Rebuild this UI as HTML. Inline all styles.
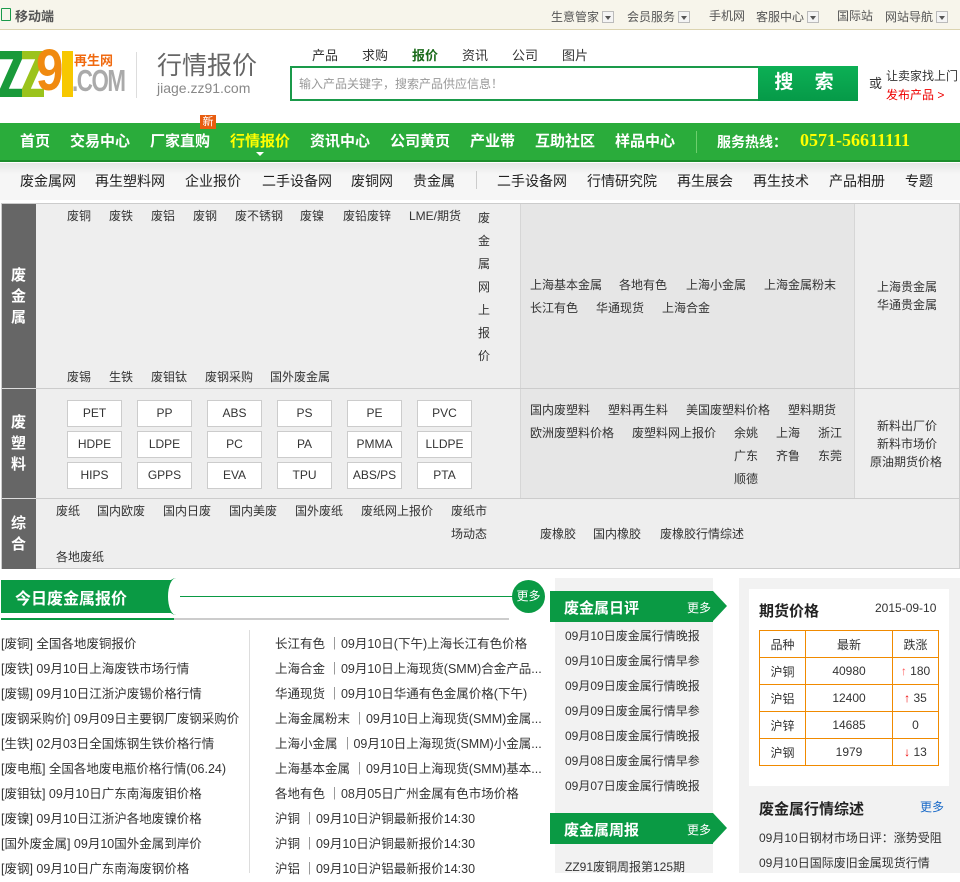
<!DOCTYPE html>
<html><head><meta charset="utf-8">
<style>
*{margin:0;padding:0;box-sizing:border-box}
body{width:960px;height:873px;overflow:hidden;position:relative;background:#fff;font-family:"Liberation Sans","Noto Sans CJK SC",sans-serif;font-size:12px;color:#333}
.a{position:absolute;white-space:nowrap}
.dd{display:inline-block;width:12px;height:12px;border:1px solid #bbb;background:#f4f4f4;vertical-align:-2px;margin-left:3px;position:relative}
.dd:after{content:"";position:absolute;left:2px;top:4px;border:3px solid transparent;border-top:4px solid #555}
.nav span{position:absolute;top:130px;color:#fff;font-size:15px;font-weight:bold}
.sub span{position:absolute;top:171px;color:#222;font-size:14px}
.t{font-size:12px;color:#333}
.box{position:absolute;width:55px;height:27px;border:1px solid #ccc;background:#fff;text-align:center;line-height:25px;font-size:12px;color:#333}
.l13{font-size:12.5px;color:#333}
</style></head><body>
<!-- top bar -->
<div class="a" style="left:0;top:0;width:960px;height:30px;background:#f7f5eb;border-bottom:1px solid #dcd4b0"></div>
<div class="a" style="left:1px;top:8px;width:10px;height:13px;border:1.5px solid #1a9a4a;border-radius:1px"></div>
<div class="a" style="left:15px;top:6px;font-size:13px;font-weight:bold;color:#555">移动端</div>
<div class="a" style="left:551px;top:8px;font-size:12px;color:#555">生意管家<i class="dd"></i></div>
<div class="a" style="left:627px;top:8px;font-size:12px;color:#555">会员服务<i class="dd"></i></div>
<div class="a" style="left:709px;top:7px;font-size:12px;color:#555">手机网</div>
<div class="a" style="left:756px;top:8px;font-size:12px;color:#555">客服中心<i class="dd"></i></div>
<div class="a" style="left:837px;top:7px;font-size:12px;color:#555">国际站</div>
<div class="a" style="left:885px;top:8px;font-size:12px;color:#555">网站导航<i class="dd"></i></div>
<!-- logo -->
<div class="a" style="left:0;top:51px;width:22px;height:46px;background:#1a9a3a;clip-path:polygon(0 0,100% 0,100% 18%,40% 82%,100% 82%,100% 100%,0 100%,0 82%,60% 18%,0 18%)"></div>
<div class="a" style="left:22px;top:51px;width:22px;height:46px;background:#9bc31c;clip-path:polygon(0 0,100% 0,100% 18%,40% 82%,100% 82%,100% 100%,0 100%,0 82%,60% 18%,0 18%)"></div>
<div class="a" style="left:36px;top:42px;font-size:58px;font-weight:bold;line-height:58px;color:#f08a10;transform:scaleX(.85);transform-origin:left">9</div>
<div class="a" style="left:62px;top:51px;width:11px;height:46px;background:#f7c800"></div>
<div class="a" style="left:74px;top:50px;font-size:13px;color:#f06a10;font-weight:bold">再生网</div>
<div class="a" style="left:72px;top:64px;font-size:31px;color:#aaa;font-weight:bold;line-height:34px;letter-spacing:-2px;transform:scaleX(.72);transform-origin:left">.COM</div>
<div class="a" style="left:136px;top:52px;width:1px;height:46px;background:#ddd"></div>
<div class="a" style="left:157px;top:46px;font-size:25px;color:#666">行情报价</div>
<div class="a" style="left:157px;top:80px;font-size:14px;color:#888">jiage.zz91.com</div>
<!-- search -->
<div class="a" style="left:312px;top:45px;font-size:13px;color:#333">产品</div>
<div class="a" style="left:362px;top:45px;font-size:13px;color:#333">求购</div>
<div class="a" style="left:412px;top:45px;font-size:13px;color:#1b6b1b;font-weight:bold">报价</div>
<div class="a" style="left:462px;top:45px;font-size:13px;color:#333">资讯</div>
<div class="a" style="left:512px;top:45px;font-size:13px;color:#333">公司</div>
<div class="a" style="left:562px;top:45px;font-size:13px;color:#333">图片</div>
<div class="a" style="left:290px;top:66px;width:568px;height:35px;border:2px solid #1a9a4a;background:#fff"></div>
<div class="a" style="left:299px;top:75px;font-size:12px;color:#999">输入产品关键字，搜索产品供应信息！</div>
<div class="a" style="left:758px;top:66px;width:100px;height:35px;background:linear-gradient(#0cb055,#069a48);color:#fff;font-size:19px;font-weight:bold;text-align:center;line-height:34px;letter-spacing:8px">搜 索</div>
<div class="a" style="left:869px;top:73px;font-size:13px;color:#333">或</div>
<div class="a" style="left:886px;top:67px;font-size:12px;color:#333">让卖家找上门</div>
<div class="a" style="left:886px;top:86px;font-size:12px;color:#e00">发布产品 &gt;</div>
<!-- green nav -->
<div class="a" style="left:0;top:123px;width:960px;height:39px;background:#2aac3b;border-bottom:2px solid #1d8d2d"></div>
<div class="nav">
<span style="left:20px">首页</span><span style="left:70px">交易中心</span><span style="left:150px">厂家直购</span><span style="left:230px;color:#ff0">行情报价</span><span style="left:310px">资讯中心</span><span style="left:390px">公司黄页</span><span style="left:470px">产业带</span><span style="left:535px">互助社区</span><span style="left:615px">样品中心</span>
<span style="left:717px;top:132px;font-size:14px">服务热线：</span><span style="left:800px;top:130px;font-size:18px;color:#ff0;font-family:'Liberation Serif',serif">0571-56611111</span>
</div>
<div class="a" style="left:696px;top:131px;width:1px;height:22px;background:#6dcf6d"></div>
<div class="a" style="left:200px;top:115px;width:16px;height:14px;background:#e85d10;color:#fff;font-size:11px;text-align:center;line-height:14px">新</div>
<div class="a" style="left:256px;top:152px;border:4px solid transparent;border-top:4px solid #fff"></div>
<!-- sub nav -->
<div class="a" style="left:0;top:163px;width:960px;height:37px;background:linear-gradient(#e6e6e6,#f6f6f6 30%,#f6f6f6)"></div>
<div class="sub"><span style="left:20px">废金属网</span><span style="left:95px">再生塑料网</span><span style="left:185px">企业报价</span><span style="left:262px">二手设备网</span><span style="left:351px">废铜网</span><span style="left:413px">贵金属</span><span style="left:497px">二手设备网</span><span style="left:587px">行情研究院</span><span style="left:677px">再生展会</span><span style="left:753px">再生技术</span><span style="left:829px">产品相册</span><span style="left:905px">专题</span></div>
<div class="a" style="left:476px;top:171px;width:1px;height:18px;background:#ccc"></div>
<!-- category table -->
<div class="a" style="left:1px;top:203px;width:959px;height:366px;background:#eee;border:1px solid #ccc"></div>
<div class="a" style="left:520px;top:204px;width:335px;height:295px;background:#e6e6e6;border-left:1px solid #d6d6d6;border-right:1px solid #d6d6d6"></div>
<div class="a" style="left:1px;top:388px;width:959px;height:1px;background:#ccc"></div>
<div class="a" style="left:1px;top:498px;width:959px;height:1px;background:#ccc"></div>
<div class="a" style="left:2px;top:204px;width:34px;height:365px;background:#666"></div>
<div class="a" style="left:2px;top:388px;width:34px;height:1px;background:#ddd"></div>
<div class="a" style="left:2px;top:498px;width:34px;height:1px;background:#ddd"></div>
<div class="a" style="left:11px;top:265px;color:#fff;font-size:15px;font-weight:bold;line-height:21px;white-space:normal;width:16px">废金属</div>
<div class="a" style="left:11px;top:412px;color:#fff;font-size:15px;font-weight:bold;line-height:21px;white-space:normal;width:16px">废塑料</div>
<div class="a" style="left:11px;top:513px;color:#fff;font-size:15px;font-weight:bold;line-height:21px;white-space:normal;width:16px">综合</div>
<div class="a t" style="left:67px;top:207px">废铜</div><div class="a t" style="left:109px;top:207px">废铁</div><div class="a t" style="left:151px;top:207px">废铝</div><div class="a t" style="left:193px;top:207px">废钢</div><div class="a t" style="left:235px;top:207px">废不锈钢</div><div class="a t" style="left:300px;top:207px">废镍</div><div class="a t" style="left:343px;top:207px">废铅废锌</div><div class="a t" style="left:409px;top:207px">LME/期货</div>
<div class="a t" style="left:478px;top:207px;white-space:normal;width:12px;line-height:23px">废金属网上报价</div>
<div class="a t" style="left:67px;top:368px">废锡</div><div class="a t" style="left:109px;top:368px">生铁</div><div class="a t" style="left:151px;top:368px">废钼钛</div><div class="a t" style="left:205px;top:368px">废钢采购</div><div class="a t" style="left:270px;top:368px">国外废金属</div>
<div class="a t" style="left:530px;top:276px">上海基本金属</div><div class="a t" style="left:619px;top:276px">各地有色</div><div class="a t" style="left:686px;top:276px">上海小金属</div><div class="a t" style="left:764px;top:276px">上海金属粉末</div>
<div class="a t" style="left:530px;top:299px">长江有色</div><div class="a t" style="left:596px;top:299px">华通现货</div><div class="a t" style="left:662px;top:299px">上海合金</div>
<div class="a t" style="left:877px;top:278px">上海贵金属</div><div class="a t" style="left:877px;top:296px">华通贵金属</div>
<!-- plastic boxes -->
<div class="box" style="left:67px;top:400px">PET</div><div class="box" style="left:137px;top:400px">PP</div><div class="box" style="left:207px;top:400px">ABS</div><div class="box" style="left:277px;top:400px">PS</div><div class="box" style="left:347px;top:400px">PE</div><div class="box" style="left:417px;top:400px">PVC</div>
<div class="box" style="left:67px;top:431px">HDPE</div><div class="box" style="left:137px;top:431px">LDPE</div><div class="box" style="left:207px;top:431px">PC</div><div class="box" style="left:277px;top:431px">PA</div><div class="box" style="left:347px;top:431px">PMMA</div><div class="box" style="left:417px;top:431px">LLDPE</div>
<div class="box" style="left:67px;top:462px">HIPS</div><div class="box" style="left:137px;top:462px">GPPS</div><div class="box" style="left:207px;top:462px">EVA</div><div class="box" style="left:277px;top:462px">TPU</div><div class="box" style="left:347px;top:462px">ABS/PS</div><div class="box" style="left:417px;top:462px">PTA</div>
<div class="a t" style="left:530px;top:401px">国内废塑料</div><div class="a t" style="left:608px;top:401px">塑料再生料</div><div class="a t" style="left:686px;top:401px">美国废塑料价格</div><div class="a t" style="left:788px;top:401px">塑料期货</div>
<div class="a t" style="left:530px;top:424px">欧洲废塑料价格</div><div class="a t" style="left:632px;top:424px">废塑料网上报价</div><div class="a t" style="left:734px;top:424px">余姚</div><div class="a t" style="left:776px;top:424px">上海</div><div class="a t" style="left:818px;top:424px">浙江</div>
<div class="a t" style="left:734px;top:447px">广东</div><div class="a t" style="left:776px;top:447px">齐鲁</div><div class="a t" style="left:818px;top:447px">东莞</div>
<div class="a t" style="left:734px;top:470px">顺德</div>
<div class="a t" style="left:877px;top:417px">新料出厂价</div><div class="a t" style="left:877px;top:435px">新料市场价</div><div class="a t" style="left:870px;top:453px">原油期货价格</div>
<div class="a t" style="left:56px;top:502px">废纸</div><div class="a t" style="left:97px;top:502px">国内欧废</div><div class="a t" style="left:163px;top:502px">国内日废</div><div class="a t" style="left:229px;top:502px">国内美废</div><div class="a t" style="left:295px;top:502px">国外废纸</div><div class="a t" style="left:361px;top:502px">废纸网上报价</div><div class="a t" style="left:451px;top:502px">废纸市</div><div class="a t" style="left:451px;top:525px">场动态</div><div class="a t" style="left:56px;top:548px">各地废纸</div>
<div class="a t" style="left:540px;top:525px">废橡胶</div><div class="a t" style="left:593px;top:525px">国内橡胶</div><div class="a t" style="left:660px;top:525px">废橡胶行情综述</div>
<!-- left news -->
<div class="a" style="left:1px;top:580px;width:172px;height:33px;background:#0a9a44"></div>
<div class="a" style="left:165px;top:578px;width:22px;height:37px;border-radius:50%/50%;background:#fff;border-left:3px solid #0a9a44"></div>
<div class="a" style="left:15px;top:585px;font-size:16px;font-weight:bold;color:#fff">今日废金属报价</div>
<div class="a" style="left:180px;top:596px;width:340px;height:1px;background:#0a9a44"></div>
<div class="a" style="left:512px;top:580px;width:33px;height:33px;border-radius:50%;background:#0a9a44;color:#fff;font-size:12px;text-align:center;line-height:33px">更多</div>
<div class="a" style="left:1px;top:618px;width:173px;height:2px;background:#0a9a44"></div>
<div class="a" style="left:174px;top:618px;width:335px;height:2px;background:#ccc"></div>
<div class="a" style="left:249px;top:630px;width:1px;height:243px;background:#ddd"></div>
<div class="a l13" style="left:1px;top:632px;line-height:25px">[废铜] 全国各地废铜报价<br>[废铁] 09月10日上海废铁市场行情<br>[废锡] 09月10日江浙沪废锡价格行情<br>[废钢采购价] 09月09日主要钢厂废钢采购价<br>[生铁] 02月03日全国炼钢生铁价格行情<br>[废电瓶] 全国各地废电瓶价格行情(06.24)<br>[废钼钛] 09月10日广东南海废钼价格<br>[废镍] 09月10日江浙沪各地废镍价格<br>[国外废金属] 09月10国外金属到岸价<br>[废钢] 09月10日广东南海废钢价格</div>
<div class="a l13" style="left:275px;top:632px;line-height:25px">长江有色 ｜09月10日(下午)上海长江有色价格<br>上海合金 ｜09月10日上海现货(SMM)合金产品...<br>华通现货 ｜09月10日华通有色金属价格(下午)<br>上海金属粉末 ｜09月10日上海现货(SMM)金属...<br>上海小金属 ｜09月10日上海现货(SMM)小金属...<br>上海基本金属 ｜09月10日上海现货(SMM)基本...<br>各地有色 ｜08月05日广州金属有色市场价格<br>沪铜 ｜09月10日沪铜最新报价14:30<br>沪铜 ｜09月10日沪铜最新报价14:30<br>沪铝 ｜09月10日沪铝最新报价14:30</div>
<!-- middle column -->
<div class="a" style="left:555px;top:578px;width:158px;height:295px;background:#f2f2f2"></div>
<div class="a" style="left:550px;top:591px;width:163px;height:31px;background:#0a9a44"></div>
<div class="a" style="left:713px;top:591px;border-left:14px solid #0a9a44;border-top:15.5px solid transparent;border-bottom:15.5px solid transparent"></div>
<div class="a" style="left:564px;top:597px;font-size:15px;font-weight:bold;color:#fff">废金属日评</div>
<div class="a" style="left:687px;top:599px;font-size:12px;color:#fff">更多</div>
<div class="a l13" style="left:565px;top:624px;line-height:25px;font-size:12px">09月10日废金属行情晚报<br>09月10日废金属行情早参<br>09月09日废金属行情晚报<br>09月09日废金属行情早参<br>09月08日废金属行情晚报<br>09月08日废金属行情早参<br>09月07日废金属行情晚报</div>
<div class="a" style="left:550px;top:813px;width:163px;height:31px;background:#0a9a44"></div>
<div class="a" style="left:713px;top:813px;border-left:14px solid #0a9a44;border-top:15.5px solid transparent;border-bottom:15.5px solid transparent"></div>
<div class="a" style="left:564px;top:819px;font-size:15px;font-weight:bold;color:#fff">废金属周报</div>
<div class="a" style="left:687px;top:821px;font-size:12px;color:#fff">更多</div>
<div class="a" style="left:565px;top:858px;font-size:12px;color:#333">ZZ91废铜周报第125期</div>
<!-- right column -->
<div class="a" style="left:739px;top:578px;width:221px;height:295px;background:#f2f2f2"></div>
<div class="a" style="left:749px;top:589px;width:200px;height:197px;background:#fff"></div>
<div class="a" style="left:759px;top:600px;font-size:15px;font-weight:bold;color:#222">期货价格</div>
<div class="a" style="left:875px;top:601px;font-size:12px;color:#333">2015-09-10</div>
<table class="a" style="left:759px;top:630px;width:180px;border-collapse:collapse;font-size:12px;color:#333;text-align:center">
<tr style="height:27px"><td style="border:1px solid #f08a00;width:46px">品种</td><td style="border:1px solid #f08a00;width:87px">最新</td><td style="border:1px solid #f08a00">跌涨</td></tr>
<tr style="height:27px"><td style="border:1px solid #f08a00">沪铜</td><td style="border:1px solid #f08a00">40980</td><td style="border:1px solid #f08a00"><span style="color:#f55">↑</span> 180</td></tr>
<tr style="height:27px"><td style="border:1px solid #f08a00">沪铝</td><td style="border:1px solid #f08a00">12400</td><td style="border:1px solid #f08a00"><span style="color:#e00">↑</span> 35</td></tr>
<tr style="height:27px"><td style="border:1px solid #f08a00">沪锌</td><td style="border:1px solid #f08a00">14685</td><td style="border:1px solid #f08a00">0</td></tr>
<tr style="height:27px"><td style="border:1px solid #f08a00">沪钢</td><td style="border:1px solid #f08a00">1979</td><td style="border:1px solid #f08a00"><span style="color:#e00">↓</span> 13</td></tr>
</table>
<div class="a" style="left:759px;top:798px;font-size:15px;font-weight:bold;color:#222">废金属行情综述</div>
<div class="a" style="left:920px;top:798px;font-size:12px;color:#1a6ac8">更多</div>
<div class="a" style="left:759px;top:829px;font-size:12px;color:#333">09月10日钢材市场日评：涨势受阻</div>
<div class="a" style="left:759px;top:854px;font-size:12px;color:#333">09月10日国际废旧金属现货行情</div>
</body></html>
